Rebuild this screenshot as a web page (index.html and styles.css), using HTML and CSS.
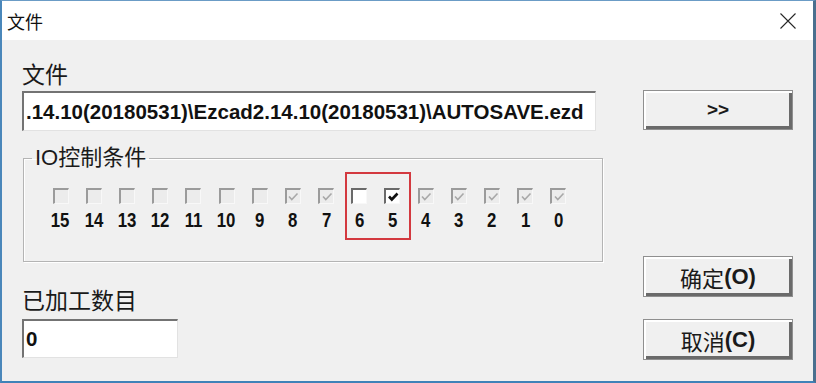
FILE: index.html
```html
<!DOCTYPE html>
<html>
<head>
	<meta charset="utf-8">
	<title>文件</title>
	<link rel="stylesheet" href="styles.css">
</head>
<body>
	<div class="finestra">
		<div class="barra">
			<span class="titolo">文件</span>
			<svg class="chiudi" width="18" height="18" viewBox="0 0 18 18">
				<path d="M1.5 1.5 L16.5 16.5 M16.5 1.5 L1.5 16.5" stroke="#262626" stroke-width="1.1" fill="none"/>
			</svg>
		</div>
		<div class="corpo">
			<div class="sinistra">
				<p class="etichetta">文件</p>
				<div class="campo campo-file">.14.10(20180531)\Ezcad2.14.10(20180531)\AUTOSAVE.ezd</div>

				<fieldset class="gruppo">
					<legend>IO控制条件</legend>
					<div class="griglia">
						<div class="bit"><span class="cb"></span><span class="num">15</span></div>
						<div class="bit"><span class="cb"></span><span class="num">14</span></div>
						<div class="bit"><span class="cb"></span><span class="num">13</span></div>
						<div class="bit"><span class="cb"></span><span class="num">12</span></div>
						<div class="bit"><span class="cb"></span><span class="num">11</span></div>
						<div class="bit"><span class="cb"></span><span class="num">10</span></div>
						<div class="bit"><span class="cb"></span><span class="num">9</span></div>
						<div class="bit"><span class="cb"><svg viewBox="0 0 12 12"><path d="M2 5.5 L4.8 8.5 L10.5 2.5" stroke="#a8a8a8" stroke-width="1.6" fill="none"/></svg></span><span class="num">8</span></div>
						<div class="bit"><span class="cb"><svg viewBox="0 0 12 12"><path d="M2 5.5 L4.8 8.5 L10.5 2.5" stroke="#a8a8a8" stroke-width="1.6" fill="none"/></svg></span><span class="num">7</span></div>
						<div class="bit"><span class="cb attivo"></span><span class="num">6</span></div>
						<div class="bit"><span class="cb attivo"><svg viewBox="0 0 12 12"><path d="M2 5.5 L4.8 8.5 L10.5 2.5" stroke="#111" stroke-width="2.6" fill="none"/></svg></span><span class="num">5</span></div>
						<div class="bit"><span class="cb"><svg viewBox="0 0 12 12"><path d="M2 5.5 L4.8 8.5 L10.5 2.5" stroke="#a8a8a8" stroke-width="1.6" fill="none"/></svg></span><span class="num">4</span></div>
						<div class="bit"><span class="cb"><svg viewBox="0 0 12 12"><path d="M2 5.5 L4.8 8.5 L10.5 2.5" stroke="#a8a8a8" stroke-width="1.6" fill="none"/></svg></span><span class="num">3</span></div>
						<div class="bit"><span class="cb"><svg viewBox="0 0 12 12"><path d="M2 5.5 L4.8 8.5 L10.5 2.5" stroke="#a8a8a8" stroke-width="1.6" fill="none"/></svg></span><span class="num">2</span></div>
						<div class="bit"><span class="cb"><svg viewBox="0 0 12 12"><path d="M2 5.5 L4.8 8.5 L10.5 2.5" stroke="#a8a8a8" stroke-width="1.6" fill="none"/></svg></span><span class="num">1</span></div>
						<div class="bit"><span class="cb"><svg viewBox="0 0 12 12"><path d="M2 5.5 L4.8 8.5 L10.5 2.5" stroke="#a8a8a8" stroke-width="1.6" fill="none"/></svg></span><span class="num">0</span></div>
						<div class="evidenza"></div>
					</div>
				</fieldset>

				<p class="etichetta etichetta-conta">已加工数目</p>
				<div class="campo campo-conta">0</div>
			</div>
			<div class="destra">
				<div class="bottone bottone-sfoglia"><b>&gt;&gt;</b></div>
				<div class="bottone bottone-ok">确定<b>(O)</b></div>
				<div class="bottone bottone-annulla">取消<b>(C)</b></div>
			</div>
		</div>
	</div>
</body>
</html>
```

FILE: styles.css
```css
html, body {
	margin: 0;
	padding: 0;
	background: #ffffff;
}
.finestra {
	width: 816px;
	height: 383px;
	box-sizing: border-box;
	border-left: 2px solid #4a87ba;
	border-top: 1px solid #6b9cc6;
	border-right: 3px solid #4a6f8e;
	border-bottom: 2px solid #3f82b8;
	display: flex;
	flex-direction: column;
	font-family: "Liberation Sans", "Noto Sans CJK SC", sans-serif;
	color: #111;
}
.barra {
	height: 39px;
	flex: none;
	background: #ffffff;
	display: flex;
	align-items: center;
	justify-content: space-between;
	padding: 0 16px 0 5px;
}
.titolo {
	font-family: "Noto Sans CJK SC", sans-serif;
	font-size: 18px;
}
.chiudi {
	display: block;
}
.corpo {
	flex: 1;
	background: #f0f0f0;
	display: flex;
	gap: 40px;
	padding: 0 0 0 20px;
}
.sinistra {
	width: 581px;
	display: flex;
	flex-direction: column;
	align-items: flex-start;
}
.etichetta {
	margin: 19px 0 0 0;
	font-family: "Noto Sans CJK SC", sans-serif;
	font-size: 23px;
	line-height: 28px;
	color: #1a1a1a;
}
.etichetta-conta {
	margin-top: 23px;
}
.campo {
	box-sizing: border-box;
	background: #ffffff;
	border-top: 2px solid #737373;
	border-left: 2px solid #737373;
	border-right: 1px solid #e2e2e2;
	border-bottom: 1px solid #e2e2e2;
	font-weight: bold;
	font-size: 20.5px;
	white-space: nowrap;
	overflow: hidden;
	padding: 0 0 0 2px;
	display: flex;
	align-items: center;
}
.campo-file {
	width: 574px;
	height: 40px;
	margin-top: 4px;
}
.campo-conta {
	width: 156px;
	height: 39px;
	margin-top: 6px;
	align-items: flex-start;
	padding-top: 6px;
}
.gruppo {
	box-sizing: border-box;
	width: 580px;
	margin: 14px 0 0 1px;
	padding: 0 0 30px 0;
	min-width: 0;
	border: 1px solid #b4b4b4;
	box-shadow: inset 1px 1px 0 #ffffff, 1px 1px 0 #ffffff;
}
.gruppo legend {
	margin-left: 8px;
	padding: 0 3px;
	font-family: "Liberation Sans", "Noto Sans CJK SC", sans-serif;
	font-size: 22px;
	line-height: 26px;
	color: #1a1a1a;
}
.griglia {
	position: relative;
	display: grid;
	grid-template-columns: repeat(16, 33.2px);
	margin: 17px 0 0 20px;
}
.bit {
	display: flex;
	flex-direction: column;
	align-items: center;
}
.cb {
	box-sizing: border-box;
	width: 16px;
	height: 16px;
	background: #ececec;
	border-top: 2px solid #9b9b9b;
	border-left: 2px solid #9b9b9b;
	border-right: 1px solid #f8f8f8;
	border-bottom: 1px solid #f8f8f8;
	display: flex;
	align-items: center;
	justify-content: center;
}
.cb svg {
	width: 12px;
	height: 12px;
}
.cb.attivo {
	background: #ffffff;
	border-top-color: #6a6a6a;
	border-left-color: #6a6a6a;
}
.num {
	margin-top: 6px;
	font-weight: bold;
	font-size: 20px;
	line-height: 21px;
	transform: scaleX(0.84);
}
.evidenza {
	position: absolute;
	left: 301px;
	top: -16px;
	width: 66px;
	height: 68px;
	box-sizing: border-box;
	border: 2px solid #d3393f;
}
.destra {
	width: 150px;
	display: flex;
	flex-direction: column;
}
.bottone {
	box-sizing: border-box;
	height: 41px;
	background: #f0f0f0;
	border: 1px solid #8f8f8f;
	box-shadow: inset 2px 2px 0 #ffffff, inset -3px -3px 0 #6a6a6a;
	display: flex;
	align-items: center;
	justify-content: center;
	font-family: "Liberation Sans", "Noto Sans CJK SC", sans-serif;
	font-size: 22px;
	color: #1a1a1a;
}
.bottone b {
	font-weight: bold;
}
.bottone-sfoglia {
	margin-top: 50px;
	height: 40px;
	font-size: 19px;
}
.bottone-ok {
	margin-top: 126px;
}
.bottone-annulla {
	margin-top: 22px;
}
```
